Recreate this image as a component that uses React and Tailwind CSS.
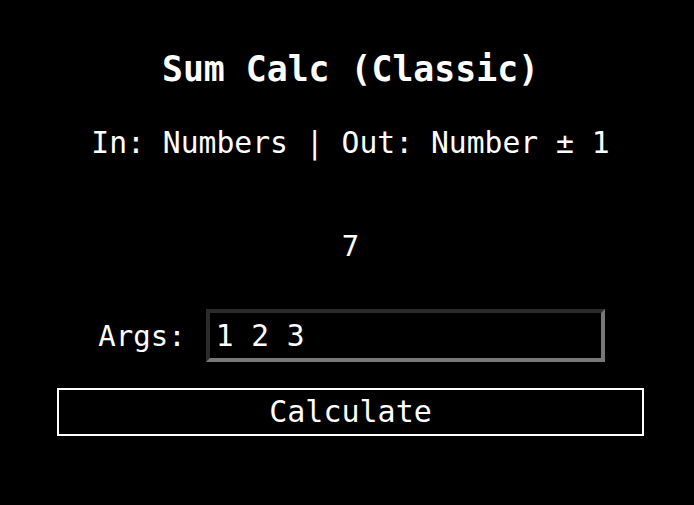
export default function App() {
  const mono = { fontFamily: '"DejaVu Sans Mono", "Liberation Mono", monospace' };
  return (
    <div className="w-[694px] h-[505px] bg-black text-white flex flex-col items-center pl-[7px]" style={mono}>
      <h1 className="mt-[49px] h-[40px] leading-[40px] text-[34.8px] font-bold">Sum Calc (Classic)</h1>
      <p className="mt-[34px] h-[40px] leading-[40px] text-[29.7px]">In: Numbers | Out: Number ± 1</p>
      <div className="mt-[63px] h-[40px] leading-[40px] text-[29px]">7</div>
      <div className="mt-[43px] flex items-center gap-[20px] ml-[2px]">
        <label className="text-[29px] leading-[40px]">Args:</label>
        <input
          defaultValue="1 2 3"
          className="w-[399px] h-[53px] bg-black text-white text-[29.5px] pl-[6px] border-4 border-t-[#2b2b2b] border-l-[#2b2b2b] border-b-[#777777] border-r-[#777777] outline-none"
          style={mono}
        />
      </div>
      <button
        className="mt-[26px] w-[587px] h-[48px] border-2 border-white bg-black text-white text-[30px] leading-[40px]"
        style={mono}
      >
        Calculate
      </button>
    </div>
  );
}
